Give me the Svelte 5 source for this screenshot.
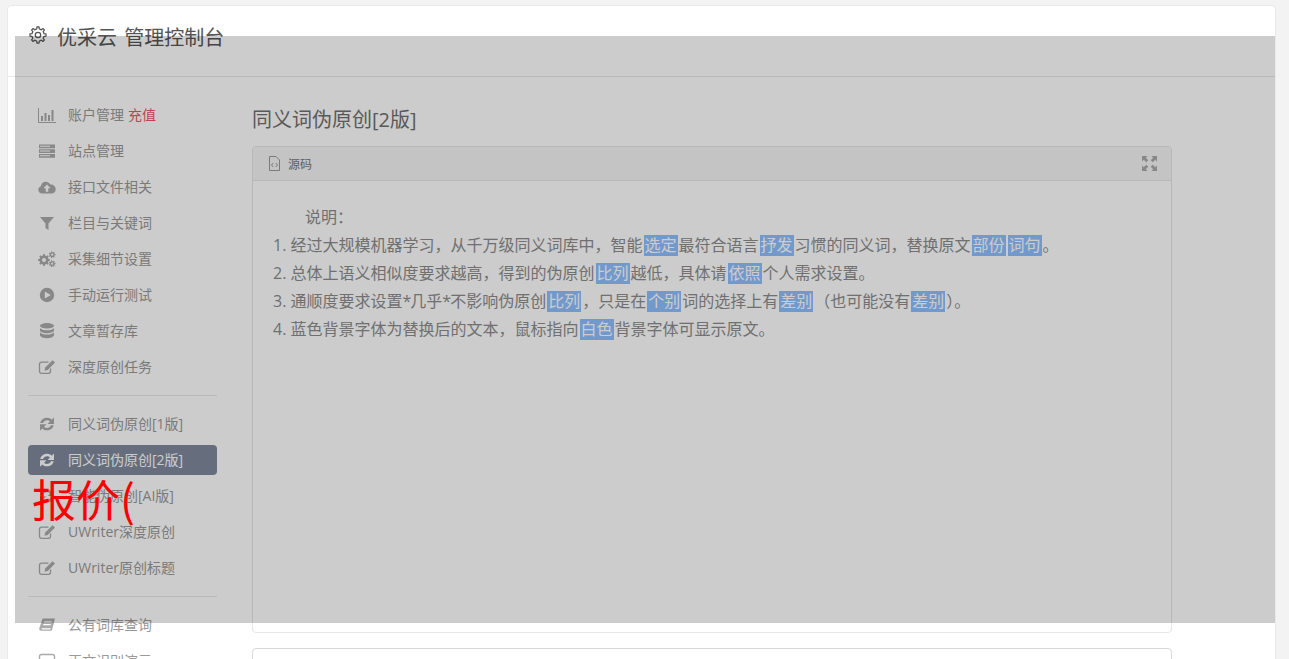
<script>
  function gear(cx, cy, r1, r2, n) {
    let d = '';
    const step = (Math.PI * 2) / n;
    for (let i = 0; i < n; i++) {
      const a = i * step;
      const pts = [
        [r1, a - step * 0.5],
        [r1, a - step * 0.27],
        [r2, a - step * 0.17],
        [r2, a + step * 0.17],
        [r1, a + step * 0.27]
      ];
      for (const [r, t] of pts) {
        d += (d ? 'L' : 'M') + (cx + r * Math.cos(t)).toFixed(2) + ' ' + (cy + r * Math.sin(t)).toFixed(2);
      }
    }
    return d + 'Z';
  }

  const groupA = [
    { icon: 'bars', label: '账户管理', extra: '充值' },
    { icon: 'server', label: '站点管理' },
    { icon: 'cloud', label: '接口文件相关' },
    { icon: 'filter', label: '栏目与关键词' },
    { icon: 'cogs', label: '采集细节设置' },
    { icon: 'play', label: '手动运行测试' },
    { icon: 'db', label: '文章暂存库' },
    { icon: 'edit', label: '深度原创任务' }
  ];
  const groupB = [
    { icon: 'sync', label: '同义词伪原创[1版]' },
    { icon: 'sync', label: '同义词伪原创[2版]', active: true },
    { icon: 'sync', label: '智能伪原创[AI版]' },
    { icon: 'edit', label: 'UWriter深度原创' },
    { icon: 'edit', label: 'UWriter原创标题' }
  ];
  const groupC = [
    { icon: 'book', label: '公有词库查询' },
    { icon: 'box', label: '正文识别演示' }
  ];
  const groups = [groupA, groupB, groupC];

  const lines = [
    ['1. 经过大规模机器学习，从千万级同义词库中，智能', ['选定'], '最符合语言', ['抒发'], '习惯的同义词，替换原文', ['部份'], ['词句'], '。'],
    ['2. 总体上语义相似度要求越高，得到的伪原创', ['比列'], '越低，具体请', ['依照'], '个人需求设置。'],
    ['3. 通顺度要求设置', { s: '*' }, '几乎', { s: '*' }, '不影响伪原创', ['比列'], '，只是在', ['个别'], '词的选择上有', ['差别'], '（也可能没有', ['差别'], '）。'],
    ['4. 蓝色背景字体为替换后的文本，鼠标指向', ['白色'], '背景字体可显示原文。']
  ];
</script>

{#snippet icon(name)}
  <svg class="ico" viewBox="0 0 18 16" aria-hidden="true">
    {#if name === 'bars'}
      <path d="M0.5 1V15.5H18" fill="none" stroke="currentColor" />
      <path d="M3 9h2v5H3zM6.5 6h2v8h-2zM10 8h2v6h-2zM13.5 3h2v11h-2z" fill="currentColor" />
    {:else if name === 'server'}
      <path fill-rule="evenodd" d="M1 1.500h16v3.700H1zM2 2.800v1h10v-1zM1 6.200h16v3.700H1zM2 7.500v1h10v-1zM1 11h16v3.700H1zM2 12.300v1h10v-1z" fill="currentColor" />
    {:else if name === 'cloud'}
      <path fill-rule="evenodd" d="M4.200 14.500C2 14.500.3 12.900.3 10.800c0-1.700 1.100-3.100 2.600-3.600C3.100 4.700 5.200 2.800 7.800 2.800c2 0 3.700 1.100 4.500 2.800 2.900-.2 5.400 2 5.400 4.800 0 2.300-1.900 4.100-4.200 4.100zM9 5.600 5.400 9.300h2.300v3.400h2.600V9.300h2.300z" fill="currentColor" />
    {:else if name === 'filter'}
      <path d="M2 2h14l-5.500 6.500V15l-3-2V8.500z" fill="currentColor" />
    {:else if name === 'cogs'}
      <path fill-rule="evenodd" d="{gear(6, 9, 4.6, 6, 8)}M8 9a2 2 0 1 0-4 0 2 2 0 0 0 4 0z" fill="currentColor" />
      <path fill-rule="evenodd" d="{gear(14.2, 3.7, 2.5, 3.5, 7)}M15.300 3.700a1.100 1.100 0 1 0-2.200 0 1.100 1.100 0 0 0 2.200 0z" fill="currentColor" />
      <path fill-rule="evenodd" d="{gear(14.2, 12.7, 2.5, 3.5, 7)}M15.300 12.700a1.100 1.100 0 1 0-2.200 0 1.100 1.100 0 0 0 2.200 0z" fill="currentColor" />
    {:else if name === 'play'}
      <path fill-rule="evenodd" d="M9 .8a7.200 7.200 0 1 1 0 14.400A7.200 7.200 0 0 1 9 .8zM6.800 4.600v6.800L12.800 8z" fill="currentColor" />
    {:else if name === 'db'}
      <ellipse cx="9" cy="2.800" rx="7" ry="2.700" fill="currentColor" />
      <path d="M2 4.900c1 1.500 3.700 2.300 7 2.300s6-.8 7-2.300v2.900c-.6 1.500-3.500 2.500-7 2.500s-6.400-1-7-2.500zM2 9.300c1 1.500 3.700 2.300 7 2.300s6-.8 7-2.300v3.200c-.6 1.500-3.500 2.700-7 2.700s-6.400-1.200-7-2.700z" fill="currentColor" />
    {:else if name === 'edit'}
      <path d="M12.500 9.500v2.800a2 2 0 0 1-2 2H3.500a2 2 0 0 1-2-2V5.200a2 2 0 0 1 2-2h7" fill="none" stroke="currentColor" stroke-width="1.300" />
      <path d="M14.600 1.200l2.400 2.300-7.300 7.400-3.200.8.700-3.200z" fill="currentColor" />
    {:else if name === 'sync'}
      <path transform="translate(9 8) scale(1.180) translate(-9 -8)" d="M3.300 7.200C3.900 4.600 6.200 2.800 9 2.800c1.600 0 3 .6 4 1.600l1.900-1.900v5.400H9.500l2-2c-.7-.7-1.600-1-2.500-1-1.500 0-2.700.8-3.300 2.300zM14.700 9c-.6 2.600-2.900 4.400-5.700 4.400-1.600 0-3-.6-4-1.600l-1.900 1.900V8.300h5.400l-2 2c.7.7 1.600 1 2.500 1 1.500 0 2.700-.8 3.300-2.300z" fill="currentColor" />
    {:else if name === 'book'}
      <path fill-rule="evenodd" d="M4.600 1.500H17l-2.900 11.200a1.500 1.500 0 0 1-1.400 1.100H3.200c-1.600 0-2.200-1.200-1.800-2.800zM6.200 4.200l-.3 1.200h7.500l.3-1.200zM5.400 7l-.3 1.200h7.500l.3-1.200zM3.700 11.200c-.3 1 .1 1.300.7 1.300h8l.4-1.300z" fill="currentColor" />
    {:else}
      <rect x="1.500" y="1.500" width="15" height="13" rx="2" fill="none" stroke="currentColor" stroke-width="1.400" />
    {/if}
  </svg>
{/snippet}

<div class="page">
  <div class="card">
    <header class="top">
      <svg class="gear" viewBox="0 0 20 20" aria-hidden="true">
        <path d={gear(10, 10, 6.8, 9, 8)} fill="none" stroke="currentColor" stroke-width="1.400" stroke-linejoin="round" />
        <circle cx="10" cy="10" r="3" fill="none" stroke="currentColor" stroke-width="1.400" />
      </svg>
      <span class="brand">优采云 管理控制台</span>
    </header>

    <div class="body">
      <nav class="side">
        {#each groups as group, g}
          {#if g > 0}<div class="rule"></div>{/if}
          {#each group as item}
            <div class="item" class:active={item.active}>
              {@render icon(item.icon)}
              <span class="label">{item.label}</span>
              {#if item.extra}<span class="label extra">{item.extra}</span>{/if}
            </div>
          {/each}
        {/each}
      </nav>

      <main class="main">
        <h1>同义词伪原创[2版]</h1>
        <section class="panel">
          <div class="panel-head">
            <svg class="file" viewBox="0 0 11 15" aria-hidden="true">
              <path d="M.5.5h6.500l3.500 3.500v10.500H.5z" fill="none" stroke="currentColor" />
              <path d="M4.200 7 2.500 9l1.700 2M6.800 7l1.700 2-1.700 2" fill="none" stroke="currentColor" />
            </svg>
            <span>源码</span>
            <svg class="expand" viewBox="0 0 15 15" aria-hidden="true">
              <path d="M0 0h5.500L3.800 1.700 6.300 4.200 4.200 6.300 1.700 3.800 0 5.500zM15 0v5.500L13.300 3.800 10.800 6.300 8.700 4.200l2.500-2.500L9.500 0zM0 15V9.500l1.700 1.700L4.200 8.700l2.100 2.100-2.500 2.500L5.500 15zM15 15H9.500l1.700-1.700-2.500-2.500 2.100-2.100 2.500 2.500L15 9.500z" fill="currentColor" />
            </svg>
          </div>
          <div class="panel-body">
            <p class="intro">说明：</p>
            {#each lines as line}
              <p>
                {#each line as part}{#if Array.isArray(part)}<span class="hl">{part[0]}</span>{:else if part.s}<span class="star">{part.s}</span>{:else}{part}{/if}{/each}
              </p>
            {/each}
          </div>
        </section>
        <section class="panel next"></section>
      </main>
    </div>
  </div>

  <div class="veil"></div>
  <div class="stamp">报价(</div>
</div>

<style>
  :global(body) {
    margin: 0;
    background: #f3f3f3;
    overflow: hidden;
  }
  .page {
    position: relative;
    height: 659px;
    overflow: hidden;
    padding: 6px 14px 0 8px;
    box-sizing: border-box;
    font-family: "Open Sans", "Noto Sans CJK SC", sans-serif;
    color: #8c8c8c;
  }
  .card {
    background: #fff;
    border-radius: 4px;
    box-shadow: 0 0 0 1px #e9e9e9;
    height: 800px;
  }
  .top {
    display: flex;
    align-items: center;
    height: 71px;
    padding: 0 0 0 21px;
    box-sizing: border-box;
    border-bottom: 1px solid #e7eaec;
    color: #555;
  }
  .gear {
    width: 18px;
    height: 18px;
    margin-top: -12px;
  }
  .brand {
    font-size: 20px;
    margin-left: 10px;
    margin-top: -9px;
    word-spacing: 2px;
  }
  .body {
    display: flex;
    padding-left: 20px;
  }
  .side {
    width: 189px;
    flex: none;
    padding-top: 23px;
  }
  .item {
    display: flex;
    align-items: center;
    height: 30px;
    margin-bottom: 6px;
    padding-left: 10px;
    border-radius: 4px;
    font-size: 14px;
    color: #999;
  }
  .item.active {
    background: #808a9e;
    color: #fff;
  }
  .label {
    margin-top: -2px;
  }
  .ico {
    width: 18px;
    height: 16px;
    margin-right: 12px;
    flex: none;
    color: #aaa;
  }
  .item.active .ico {
    color: #fff;
  }
  .extra {
    margin-left: 4px;
    color: #ed5565;
  }
  .rule {
    height: 1px;
    background: #e7eaec;
    margin: 13px 0 13px;
  }
  .main {
    margin-left: 35px;
    width: 920px;
    padding-top: 29px;
  }
  h1 {
    margin: 0 0 12px;
    font-size: 20px;
    font-weight: 400;
    line-height: 28px;
    color: #707070;
  }
  .panel {
    height: 485px;
    border: 1px solid #e7e7e7;
    border-radius: 4px;
    background: #fff;
  }
  .panel.next {
    margin-top: 15px;
    border-color: #d8d8d8;
  }
  .panel-head {
    display: flex;
    align-items: center;
    height: 34px;
    box-sizing: border-box;
    padding: 0 14px 0 16px;
    background: #f5f5f5;
    border-bottom: 1px solid #e7e7e7;
    border-radius: 4px 4px 0 0;
    font-size: 12px;
    color: #777;
  }
  .file {
    width: 11px;
    height: 15px;
    margin-right: 8px;
    color: #999;
  }
  .expand {
    width: 15px;
    height: 15px;
    margin-left: auto;
    color: #aaa;
  }
  .panel-body {
    padding: 22px 20px 0;
    font-size: 16px;
    line-height: 28px;
  }
  .panel-body p {
    margin: 0;
  }
  .panel-body .intro {
    padding-left: 32px;
  }
  .star {
    letter-spacing: -1px;
  }
  .hl {
    display: inline-block;
    height: 21px;
    line-height: 21px;
    margin: 0 1px;
    padding: 0 1px;
    background: #8fc0ff;
    color: #fff;
  }
  .veil {
    position: absolute;
    left: 15px;
    top: 36px;
    width: 1260px;
    height: 587px;
    background: rgba(0, 0, 0, 0.2);
  }
  .stamp {
    position: absolute;
    left: 32px;
    top: 465px;
    font-size: 44px;
    line-height: 66px;
    color: #f00;
    font-family: "Noto Sans CJK SC", sans-serif;
    font-weight: 400;
  }
</style>
